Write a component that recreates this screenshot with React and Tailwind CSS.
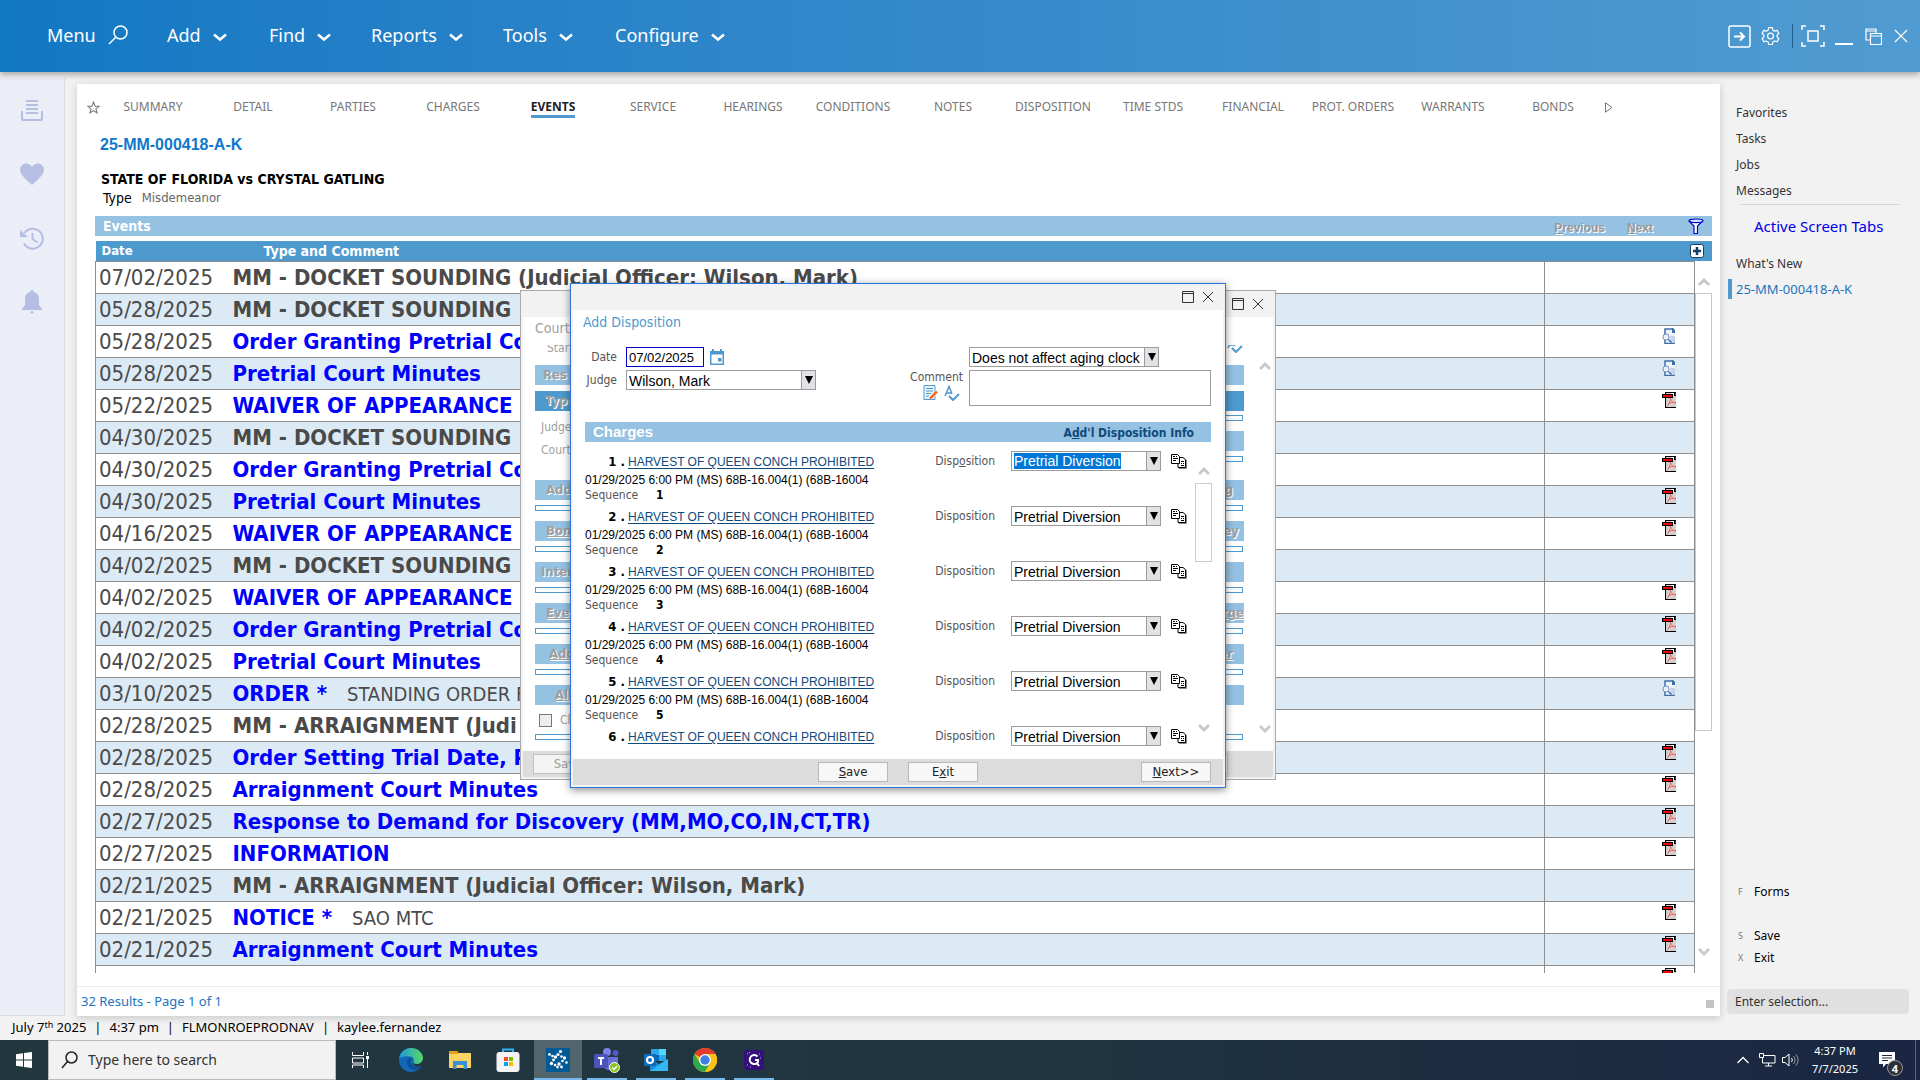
import React from "react";

const UI = "font-['Noto_Sans','Open_Sans',sans-serif]";
const TAH = "font-['DejaVu_Sans_Condensed','DejaVu_Sans',sans-serif]";
const ARIAL = "font-['Liberation_Sans',Arial,sans-serif]";

const MENUS = [
  { label: "Add", w: "w-[102px]" },
  { label: "Find", w: "w-[102px]" },
  { label: "Reports", w: "w-[132px]" },
  { label: "Tools", w: "w-[112px]" },
  { label: "Configure", w: "w-[140px]" },
];

const TABS = [
  "SUMMARY", "DETAIL", "PARTIES", "CHARGES", "EVENTS", "SERVICE", "HEARINGS", "CONDITIONS",
  "NOTES", "DISPOSITION", "TIME STDS", "FINANCIAL", "PROT. ORDERS", "WARRANTS", "BONDS",
];

const EVENTS = [
  { d: "07/02/2025", t: "MM - DOCKET SOUNDING (Judicial Officer: Wilson, Mark)" },
  { d: "05/28/2025", t: "MM - DOCKET SOUNDING" },
  { d: "05/28/2025", t: "Order Granting Pretrial Conf", link: true, icon: "doc" },
  { d: "05/28/2025", t: "Pretrial Court Minutes", link: true, icon: "doc" },
  { d: "05/22/2025", t: "WAIVER OF APPEARANCE", link: true, icon: "pdf" },
  { d: "04/30/2025", t: "MM - DOCKET SOUNDING" },
  { d: "04/30/2025", t: "Order Granting Pretrial Conf", link: true, icon: "pdf" },
  { d: "04/30/2025", t: "Pretrial Court Minutes", link: true, icon: "pdf" },
  { d: "04/16/2025", t: "WAIVER OF APPEARANCE", link: true, icon: "pdf" },
  { d: "04/02/2025", t: "MM - DOCKET SOUNDING" },
  { d: "04/02/2025", t: "WAIVER OF APPEARANCE", link: true, icon: "pdf" },
  { d: "04/02/2025", t: "Order Granting Pretrial Conf", link: true, icon: "pdf" },
  { d: "04/02/2025", t: "Pretrial Court Minutes", link: true, icon: "pdf" },
  { d: "03/10/2025", t: "ORDER *", note: "STANDING ORDER F", link: true, icon: "doc" },
  { d: "02/28/2025", t: "MM - ARRAIGNMENT (Judi" },
  { d: "02/28/2025", t: "Order Setting Trial Date, P", link: true, icon: "pdf" },
  { d: "02/28/2025", t: "Arraignment Court Minutes", link: true, icon: "pdf" },
  { d: "02/27/2025", t: "Response to Demand for Discovery (MM,MO,CO,IN,CT,TR)", link: true, icon: "pdf" },
  { d: "02/27/2025", t: "INFORMATION", link: true, icon: "pdf" },
  { d: "02/21/2025", t: "MM - ARRAIGNMENT (Judicial Officer: Wilson, Mark)" },
  { d: "02/21/2025", t: "NOTICE *", note: "SAO MTC", link: true, icon: "pdf" },
  { d: "02/21/2025", t: "Arraignment Court Minutes", link: true, icon: "pdf" },
  { d: "", t: "", icon: "pdf" },
];

const PdfIcon = () => (
  <svg width="14" height="16" viewBox="0 0 14 16" aria-hidden="true">
    <rect x="3" y="0" width="11" height="16" fill="#000" />
    <rect x="4" y="1" width="10" height="14" fill="#d0d0d0" />
    <rect x="9" y="1" width="3" height="3" fill="#fff" />
    <rect x="12" y="0" width="2" height="4" fill="#000" />
    <rect x="13" y="1" width="1" height="2" fill="#f00" />
    <path d="M4.500 14.500c2-1.500 4-5 4-8 1 3 2.500 4.500 5.500 4.500M6 12c2-1.500 5-2 8-1.500" stroke="#f76a5c" fill="none" />
    <rect x="0" y="2" width="11" height="4" fill="#000" />
    <rect x="1" y="3" width="9" height="2" fill="#f00" />
  </svg>
);

const DocIcon = () => (
  <svg width="14" height="16" viewBox="0 0 14 16" aria-hidden="true">
    <path d="M3 1h8l2 4v10H3z" fill="#eef3fa" />
    <path d="M3 6V1h8M3 12v3.500h10" stroke="#3f6ea8" strokeWidth="1.500" fill="none" />
    <path d="M10 0h1l2 2v3h-3z" fill="#3f6ea8" />
    <path d="M8 8h5v6H9z" fill="#c6d4e9" />
    <circle cx="4" cy="9" r="3" fill="#edf3fb" stroke="#6d93c2" />
    <path d="M6.500 11.500l3 3" stroke="#3f6ea8" strokeWidth="1.500" />
  </svg>
);

const Chev = ({ up, size = 12 }) => (
  <svg width={size} height="10" viewBox="0 0 12 10" aria-hidden="true">
    <path d={up ? "M1 8l5-5 5 5" : "M1 2l5 5 5-5"} stroke="#c8c8c8" strokeWidth="3" fill="none" />
  </svg>
);

const Tri = () => (
  <svg width="8" height="8" viewBox="0 0 8 8" aria-hidden="true"><path d="M0 0h8L4 8z" fill="#000" /></svg>
);

function Combo({ id, value, width, selected, label }) {
  return (
    <div className={`flex h-5 items-stretch border border-[#9b9b9b] bg-white ${width}`}>
      <select
        id={id}
        aria-label={label}
        className={
          selected
            ? `${ARIAL} my-px ml-0.5 appearance-none bg-[#0078d7] text-sm leading-4 text-white outline-none [field-sizing:content]`
            : `${ARIAL} ml-0.5 min-w-0 flex-1 appearance-none bg-white pt-0.5 text-sm leading-4 text-black outline-none`
        }
      >
        <option>{value}</option>
      </select>
      <span className="ml-auto flex w-3.5 shrink-0 items-center justify-center border-l border-[#9b9b9b] bg-[#e1e1e6]">
        <Tri />
      </span>
    </div>
  );
}

const WinButtons = () => (
  <span className="flex items-center gap-2 text-[#333]">
    <button aria-label="Maximize">
      <svg className="block" width="12" height="12" viewBox="0 0 12 12"><path d="M.5.5h11v11H.5zM0 2.500h12" stroke="currentColor" fill="none" /></svg>
    </button>
    <button aria-label="Close">
      <svg className="block" width="12" height="12" viewBox="0 0 12 12"><path d="M1 1l10 10M11 1L1 11" stroke="currentColor" fill="none" /></svg>
    </button>
  </span>
);

const SpellIcon = () => (
  <svg width="16" height="16" viewBox="0 0 16 16" className="shrink-0" aria-hidden="true">
    <path d="M1 11L5 1.500 8 9M2.500 8H7" stroke="#4e9acf" strokeWidth="1.500" fill="none" />
    <path d="M5 11l4 4 6-6" stroke="#4e9acf" strokeWidth="2" fill="none" />
  </svg>
);

const CopyIcon = () => (
  <svg width="16" height="15" viewBox="0 0 16 15" aria-hidden="true">
    <path d="M8 14.500h7.500V6" stroke="#888" fill="none" />
    <path d="M7 3.500h5l2.500 2v8H7z" fill="#fff" stroke="#000" />
    <path d="M.5.500h6l2 2V9.500H.5z" fill="#fff" stroke="#000" />
    <path d="M2 2.500h2M5 2.500h1M2 4.500h5M2 6.500h3M10 7.500h3M10 9.500h1M12 9.500h1M10 11.500h3" stroke="#000" />
  </svg>
);

const DisabledText = ({ children, under }) => (
  <span className={`text-[13px] font-bold text-[#a0a0a0] [text-shadow:1px_1px_0_#fff] ${under ? "underline" : ""}`}>{children}</span>
);

const Strip = () => <div className="mr-px h-1.5 shrink-0 border border-[#4e9acf] bg-white" />;

function BackDialog() {
  const bars = [
    ["Add", "g", "pl-[11px]", "pr-[11px]"],
    ["Bon", "ey", "pl-[11px]", "pr-[5px]"],
    ["Inter", "", "pl-1.5", "pr-1"],
    ["Eve", "rge", "pl-[11px]", "pr-0"],
    ["Add", "er", "pl-3.5", "pr-[11px]"],
    ["All", "", "pl-5", "pr-1"],
  ];
  return (
    <section aria-label="Hearing" className={`${TAH} absolute left-[520px] top-[290px] flex h-[490px] w-[756px] flex-col border border-[#aaa] bg-[#f2f2f2] px-0.5 pb-0.5 text-xs text-[#a0a0a0]`}>
      <header className="flex h-[26px] shrink-0 items-center justify-end pr-[9px]"><WinButtons /></header>
      <div className="flex min-h-0 flex-1 bg-white pl-3">
        <div className="flex min-w-0 flex-1 flex-col">
          <h2 className="pt-0.5 text-sm leading-[18px]">Courtr</h2>
          <div className="mt-2 flex h-4 items-start justify-between pl-3">
            <span className="h-2 overflow-hidden"><span className="block leading-[6px]">Start</span></span>
            <span className="flex h-2 items-end overflow-hidden pr-px"><SpellIcon /></span>
          </div>
          <div className="mt-1 flex h-5 shrink-0 items-center bg-[#95c1e2] pl-2"><DisabledText>Res</DisabledText></div>
          <div className="mt-1.5 flex h-5 shrink-0 items-center bg-[#4e9acf] pl-2.5"><DisabledText>Type</DisabledText></div>
          <div className="grid h-[69px] shrink-0 grid-cols-2">
            <div className="flex flex-col gap-2 pl-1.5 pt-[9px]">
              <span className="leading-[15px]">Judge</span>
              <span className="leading-[15px]">Court</span>
            </div>
            <div className="flex flex-col pt-1">
              <Strip />
              <div className="mt-2.5 mb-[5px] h-5 bg-[#95c1e2]" />
              <Strip />
            </div>
          </div>
          {bars.map(([l, r, pl, pr], i) => (
            <div key={i} className="h-[41px] shrink-0">
              <div className={`flex h-5 items-center justify-between bg-[#95c1e2] ${pl} ${pr}`}>
                <DisabledText under={i !== 0 && i !== 2}>{l}</DisabledText>
                <DisabledText under={i > 2}>{r}</DisabledText>
              </div>
              {i < 5 ? (
                <div className="pt-[5px]"><Strip /></div>
              ) : (
                <label className="flex items-center gap-2 pl-1 pt-[7px]">
                  <input type="checkbox" className="size-[13px] appearance-none border border-[#777] bg-[#eee]" />
                  Clo
                </label>
              )}
            </div>
          ))}
          <div className="mt-2"><Strip /></div>
        </div>
        <div className="flex w-[29px] flex-col items-center justify-between pb-[17px] pl-3 pt-11">
          <Chev up />
          <Chev />
        </div>
      </div>
      <footer className="flex h-[26px] shrink-0 items-center justify-between bg-[#dcdcdc] pl-2.5 pr-[45px]">
        <button className="h-5 w-[70px] border border-[#c0c0c0] bg-[#f4f4f4] text-[13px] leading-4">Save</button>
        <span className="h-5 w-[70px] border border-[#c0c0c0] bg-[#f4f4f4]" />
      </footer>
    </section>
  );
}

function DispositionDialog() {
  const label = "text-xs text-[#555]";
  const btn = "h-5 w-[70px] border border-[#b8b8b8] bg-[#f7f7f7] text-[13px] leading-4 text-[#222]";
  return (
    <section aria-label="Add Disposition" className={`${TAH} absolute left-[570px] top-[283px] flex h-[505px] w-[656px] flex-col border border-[#2f74dd] bg-[#f2f2f2] px-0.5 pb-0.5 shadow-[0_2px_8px_rgba(0,0,0,0.45)]`}>
      <header className="flex h-[26px] shrink-0 items-center justify-end pr-[9px]"><WinButtons /></header>
      <div className="flex min-h-0 flex-1 flex-col bg-white pl-3 pr-3">
        <h2 className="-ml-0.5 pt-0.5 text-sm leading-5 text-[#4e9acf]">Add Disposition</h2>
        <div className="mt-[15px] flex justify-between">
          <div className="flex flex-col gap-[3px]">
            <div className="flex items-center">
              <label htmlFor="date" className={`${label} w-8 text-right`}>Date</label>
              <input id="date" defaultValue="07/02/2025" className={`${ARIAL} ml-[9px] h-5 w-[78px] border border-[#0000c8] bg-white pl-0.5 text-[13px] outline-none`} />
              <button aria-label="Pick date" className="ml-1.5">
                <svg width="14" height="16" viewBox="0 0 14 16"><path d="M0 2h2V0h2v2h6V0h2v2h2v14H0z" fill="#4e9acf" /><path d="M1.500 5.500h11v9h-11z" fill="#fff" /><path d="M8 9h3.500v3.500H8z" fill="#4e9acf" /></svg>
              </button>
            </div>
            <div className="flex items-center">
              <label htmlFor="judge" className={`${label} flex w-8 justify-end`}>Judge</label>
              <div className="ml-[9px]"><Combo id="judge" value="Wilson, Mark" width="w-[190px]" /></div>
            </div>
          </div>
          <div className="flex gap-1.5">
            <div className="pt-[23px] text-right">
              <label htmlFor="comment" className={`${label} block leading-[15px]`}>Comment</label>
              <div className="flex items-center justify-end gap-1.5 pr-[3px]">
                <button aria-label="Edit comment">
                  <svg className="block" width="15" height="16" viewBox="0 0 15 16"><path d="M1 .5h11v14H1z" fill="#eaf4fb" stroke="#4e9acf" /><path d="M3 3.500h7M3 6h7M3 8.500h5M3 11h3" stroke="#4e9acf" /><path d="M7 13l7-6" stroke="#fff" strokeWidth="4" /><path d="M7 13.500l7-7" stroke="#ef6c2a" strokeWidth="2.500" /></svg>
                </button>
                <button aria-label="Check spelling"><span className="block"><SpellIcon /></span></button>
              </div>
            </div>
            <div className="flex flex-col gap-[3px]">
              <Combo value="Does not affect aging clock" width="w-[190px]" label="Aging clock" />
              <textarea id="comment" className="block h-9 w-[242px] resize-none border border-[#9b9b9b] bg-white outline-none" />
            </div>
          </div>
        </div>
        <div className="mt-4 flex h-5 shrink-0 items-center justify-between bg-[#95c1e2] pl-2 pr-[17px]">
          <h3 className={`${ARIAL} text-[15px] font-bold leading-5 text-white`}>Charges</h3>
          <a href="#info" className="pt-0.5 text-xs font-bold text-[#0f4a7c]">A<u>d</u>d'l Disposition Info</a>
        </div>
        <div className="mt-[9px] flex min-h-0 flex-1">
          <ol className="min-w-0 flex-1 overflow-hidden">
            {[1, 2, 3, 4, 5, 6].map((n) => (
              <li key={n} className="flex h-[55px] justify-between pr-2">
                <div>
                  <div className="flex h-5 items-center pt-px">
                    <span className="w-10 text-right text-[13px] font-bold">{n} .</span>
                    <a href={`#charge-${n}`} className={`${ARIAL} ml-[3px] text-xs text-[#0f4a7c] underline underline-offset-2`}>HARVEST OF QUEEN CONCH PROHIBITED</a>
                  </div>
                  {n < 6 && (
                    <>
                      <p className={`${ARIAL} pt-px text-xs leading-4`}>01/29/2025 6:00 PM (MS) 68B-16.004(1) (68B-16004</p>
                      <p className="flex gap-4 text-xs leading-[15px]"><span className="w-[55px] text-[#555]">Sequence</span><b>{n}</b></p>
                    </>
                  )}
                </div>
                <div className="flex h-5 items-center">
                  <label htmlFor={`disp-${n}`} className={label}>Disp{n === 1 ? <u>o</u> : "o"}sition</label>
                  <div className="ml-4"><Combo id={`disp-${n}`} value="Pretrial Diversion" width="w-[150px]" selected={n === 1} /></div>
                  <button aria-label="Copy disposition" className="ml-2.5"><CopyIcon /></button>
                </div>
              </li>
            ))}
          </ol>
          <div className="-mr-px flex w-[17px] flex-col items-center pb-[26px] pt-[15px]">
            <Chev up />
            <div className="mt-[7px] h-[79px] w-full border border-[#ccc] bg-white" />
            <div className="mt-auto"><Chev /></div>
          </div>
        </div>
      </div>
      <footer className="flex h-[26px] shrink-0 items-center bg-[#dcdcdc] pl-[245px] pr-3">
        <button className={btn}><u>S</u>ave</button>
        <button className={`${btn} ml-5`}>E<u>x</u>it</button>
        <button className={`${btn} ml-auto`}><u>N</u>ext&gt;&gt;</button>
      </footer>
    </section>
  );
}

function TopBar() {
  return (
    <header className={`${UI} relative z-10 flex h-[72px] shrink-0 items-center justify-between bg-linear-to-r from-[#1178c4] to-[#509bd1] pl-[47px] pr-3 text-white shadow-[0_3px_6px_rgba(0,0,0,0.3)]`}>
      <nav className="flex items-center pb-0.5 text-lg">
        <button className="flex w-[120px] items-center gap-3">
          Menu
          <svg width="20" height="20" viewBox="0 0 20 20" fill="none" stroke="currentColor" strokeWidth="1.500"><circle cx="12.500" cy="7.500" r="6.500" /><path d="M8 12l-7 7" /></svg>
        </button>
        {MENUS.map((m) => (
          <button key={m.label} className={`flex items-center gap-3 ${m.w}`}>
            {m.label}
            <svg className="mt-1" width="14" height="9" viewBox="0 0 14 9"><path d="M1 1.500l6 5 6-5" stroke="currentColor" strokeWidth="2.500" fill="none" /></svg>
          </button>
        ))}
      </nav>
      <div className="flex items-center">
        <button aria-label="Sign out"><svg width="23" height="23" viewBox="0 0 23 23" fill="none" stroke="currentColor" strokeWidth="1.500"><rect x="1" y="1" width="21" height="21" rx="2" /><path d="M6 11.500h10M12 7.500l4 4-4 4" strokeWidth="2" /></svg></button>
        <button aria-label="Settings" className="ml-2.5">
          <svg width="19" height="20" viewBox="0 0 24 24" fill="none" stroke="currentColor" strokeWidth="1.500" strokeLinejoin="round"><path d="M9.700 1.500h4.600l.7 3.100 2.300 1.300 3-1 2.300 4-2.300 2v2.400l2.300 2-2.300 4-3-1-2.300 1.300-.7 3.100H9.700L9 19.600l-2.300-1.300-3 1-2.300-4 2.300-2v-2.400l-2.300-2 2.300-4 3 1L9 4.600z" /><circle cx="12" cy="12.100" r="3.700" /></svg>
        </button>
        <span className="ml-3 h-6 w-px bg-[#1e5f94]" />
        <button aria-label="Fit" className="ml-2"><svg width="24" height="22" viewBox="0 0 24 22" fill="none" stroke="currentColor" strokeWidth="1.500"><path d="M1 5V1h4M19 1h4v4M23 17v4h-4M5 21H1v-4M7 6h10v10H7z" /></svg></button>
        <button aria-label="Minimize" className="ml-2.5 mt-4 h-0.5 w-[18px] bg-white" />
        <button aria-label="Restore" className="ml-3"><svg width="17" height="17" viewBox="0 0 17 17" fill="none" stroke="currentColor" strokeWidth="1.200"><path d="M5 12H1V1h10v4M1 3h10M5.500 5.500h11v11h-11zM5.500 8h11" /></svg></button>
        <button aria-label="Close" className="ml-3"><svg width="14" height="14" viewBox="0 0 14 14" stroke="currentColor" strokeWidth="1.200"><path d="M1 1l12 12M13 1L1 13" /></svg></button>
      </div>
    </header>
  );
}

function Rail() {
  return (
    <nav aria-label="Shortcuts" className="mt-1.5 flex w-[65px] shrink-0 flex-col items-center gap-10 border-r border-b border-[#dcdce0] bg-[#ebedf7] pt-5 text-[#b5bee3]">
      <button aria-label="Print queue" className="size-6"><svg width="24" height="24" viewBox="0 0 24 24" fill="none" stroke="currentColor" strokeWidth="2"><path d="M6 3h12M6 7h12M6 11h12M6 15h12" /><path d="M2 13v8q0 1 1 1h18q1 0 1-1v-8" /></svg></button>
      <button aria-label="Favorites" className="size-6"><svg width="24" height="24" viewBox="0 0 24 24" fill="currentColor"><path d="M12 23C6 17.500 0 12.500 0 7.500A6 6 0 0 1 6.200 1.500C8.500 1.500 10.700 2.700 12 5c1.300-2.300 3.500-3.500 5.800-3.500A6 6 0 0 1 24 7.500C24 12.500 18 17.500 12 23z" /></svg></button>
      <button aria-label="History" className="size-6"><svg width="24" height="24" viewBox="0 0 24 24" fill="none" stroke="currentColor" strokeWidth="2"><path d="M4.500 7A10 10 0 1 1 4 17.500" /><path d="M12.500 7v6l5 3.500" /><path d="M0 4l8 7H0z" fill="currentColor" stroke="none" /></svg></button>
      <button aria-label="Alerts" className="size-6"><svg width="24" height="24" viewBox="0 0 24 24" fill="currentColor"><path d="M12 0c1 0 1.500.8 1.500 1.800 3.500.8 5.500 3.700 5.500 7.200v6l3 4v1H2v-1l3-4V9c0-3.500 2-6.400 5.500-7.200C10.500.8 11 0 12 0zM10 21.500h4a2 2 0 0 1-4 0z" /></svg></button>
    </nav>
  );
}

function CaseCard() {
  return (
    <main className="ml-3 mt-3 flex min-w-0 flex-1 flex-col bg-white shadow-[0_2px_8px_rgba(0,0,0,0.18)]">
      <nav aria-label="Case sections" className={`${UI} flex h-[46px] shrink-0 items-center pl-2 text-xs text-[#777]`}>
        <button aria-label="Favorite" className="w-[18px] pl-0.5">
          <svg width="13" height="13" viewBox="0 0 24 24" fill="none" stroke="#777" strokeWidth="2"><path d="M12 2l3 7.500 7.500.3-6 4.700 2 7.500-6.500-4.300L5.500 22l2-7.500-6-4.700L9 9.500z" /></svg>
        </button>
        {TABS.map((t) => (
          <a key={t} href={`#${t}`} className="w-25 text-center">
            {t === "EVENTS" ? <span className="mt-0.5 inline-block border-b-3 border-[#4e9acf] font-bold leading-4 text-[#222]">{t}</span> : t}
          </a>
        ))}
        <button aria-label="More" className="ml-0.5"><svg width="8" height="11" viewBox="0 0 8 11"><path d="M.5.800l6.500 4.700-6.500 4.700z" fill="none" stroke="#777" /></svg></button>
      </nav>
      <div className={`${TAH} shrink-0 pl-[23px]`}>
        <h1 className={`${ARIAL} pt-[5px] text-base font-bold leading-5 text-[#0f78cb]`}>25-MM-000418-A-K</h1>
        <p className="pl-px pt-[15px] text-sm font-bold leading-[18px]">STATE OF FLORIDA vs CRYSTAL GATLING</p>
        <p className="flex h-5 items-center gap-2.5 pl-[3px] text-[13px]"><span className="text-sm leading-5">Type</span><span className="text-[#666]">Misdemeanor</span></p>
      </div>
      <div className={`${TAH} ml-[18px] mr-2 mt-2 flex h-5 shrink-0 items-center bg-[#95c1e2] pl-2 text-sm font-bold text-white`}>
        <h2 className="flex-1">Events</h2>
        <button disabled className={`${ARIAL} mr-[22px] pt-1 text-xs text-[#999] [text-shadow:1px_1px_0_#fff]`}><u>P</u>revious</button>
        <button disabled className={`${ARIAL} mr-[35px] pt-1 text-xs text-[#999] [text-shadow:1px_1px_0_#fff]`}><u>N</u>ext</button>
        <button aria-label="Filter" className="mr-2"><svg className="block" width="16" height="16" viewBox="0 0 16 16"><path d="M1 3l5 5v7.500h3.500V8l5-5" fill="#fff" stroke="#00c" strokeWidth="1.200" /><ellipse cx="8" cy="2.800" rx="7" ry="1.800" fill="#cfe4ff" stroke="#00c" strokeWidth="1.200" /></svg></button>
      </div>
      <div className={`${TAH} ml-[18px] mr-2 mt-[5px] flex min-h-0 flex-1 basis-0 overflow-hidden`}>
        <table className="h-0 flex-1 table-fixed border-collapse">
          <colgroup><col className="w-[137px]" /><col /><col className="w-[150px]" /></colgroup>
          <thead>
            <tr className="h-5 bg-[#4e9acf] text-left text-sm leading-5 text-white">
              <th className="p-0 pl-1.5 text-[13px] leading-5">Date</th>
              <th className="p-0 pl-[31px]">Type and Comment</th>
              <th />
            </tr>
          </thead>
          <tbody className="text-[22px] leading-[31px] text-[#4a4a4a]">
            {EVENTS.map((e, i) => (
              <tr key={i} className="h-8 border border-[#8e8e8e] even:bg-[#dceaf5]">
                <td className="p-0 pl-[3px] whitespace-nowrap">{e.d}</td>
                <td className="p-0 whitespace-nowrap">
                  {e.link ? <a href={`#event-${i}`} className="font-bold text-[#0000ff]">{e.t}</a> : <b>{e.t}</b>}
                  {e.note && <span className="pl-5 text-xl leading-5">{e.note}</span>}
                </td>
                <td className="border-l border-[#8e8e8e] p-0 pl-[117px] align-top">
                  {e.icon && <button aria-label="Open document" className="mt-0.5 block">{e.icon === "pdf" ? <PdfIcon /> : <DocIcon />}</button>}
                </td>
              </tr>
            ))}
          </tbody>
        </table>
        <div className="flex w-[17px] shrink-0 flex-col items-center">
          <div className="flex h-5 w-[26px] shrink-0 items-center self-end bg-[#4e9acf] pl-1">
            <button aria-label="Add event"><svg className="block" width="14" height="14" viewBox="0 0 14 14"><rect x=".5" y=".5" width="13" height="13" rx="2" fill="#fff" stroke="#123f66" /><path d="M7 3v8M3 7h8" stroke="#123f66" strokeWidth="2.500" /></svg></button>
          </div>
          <div className="mt-4"><Chev up size={14} /></div>
          <div className="mt-1.5 h-[438px] w-full border border-[#c8c8c8]" />
          <div className="mb-4 mt-auto"><Chev size={14} /></div>
        </div>
      </div>
      <footer className={`${UI} mt-[13px] flex h-[30px] shrink-0 items-center justify-between border-t border-[#eee] pl-1 pr-1.5 text-[13px] text-[#1b75bc]`}>
        32 Results - Page 1 of 1
        <span className="mt-1 size-2 bg-[#c4c4c4]" />
      </footer>
    </main>
  );
}

function SidePanel() {
  const item = "block h-[26px] leading-[26px]";
  return (
    <aside className={`${UI} flex w-[200px] shrink-0 flex-col pt-7 pl-2 text-xs text-[#333]`}>
      <nav className="pl-2">
        {["Favorites", "Tasks", "Jobs", "Messages"].map((t) => <a key={t} href={`#${t}`} className={item}>{t}</a>)}
      </nav>
      <hr className="ml-3 mr-5 border-[#d8d8d8]" />
      <h2 className="pl-[26px] pt-2 text-[15px] leading-[26px] text-[#0000e6]">Active Screen Tabs</h2>
      <a href="#new" className={`${item} mt-3 pl-2`}>What's New</a>
      <a href="#case" className="mt-0.5 block h-5 border-l-4 border-[#4e9acf] pl-1 text-[13px] leading-5 text-[#1b75bc]">25-MM-000418-A-K</a>
      <nav className="mt-auto pl-2.5 text-black">
        {[["F", "Forms", "mb-[22px]"], ["S", "Save", ""], ["X", "Exit", ""]].map(([k, t, m]) => (
          <button key={t} className={`flex h-[22px] items-center ${m}`}><span className="w-4 text-left text-[9px] text-[#777]">{k}</span>{t}</button>
        ))}
      </nav>
      <input aria-label="Enter selection" placeholder="Enter selection..." className="mb-0.5 mr-[11px] mt-5 -ml-px h-[25px] rounded-sm bg-[#e0e0e0] px-2 text-xs outline-none placeholder:text-[#333]" />
    </aside>
  );
}

function TaskIcon({ label, w = "w-[49px]", open, active, children }) {
  return (
    <button aria-label={label} className={`flex h-10 flex-col items-center ${w}`}>
      <span className={`flex w-full flex-1 items-center justify-center pt-0.5 ${active ? "bg-[#53656c]" : ""}`}>{children}</span>
      <span className={`h-0.5 ${active ? "w-full" : "w-10"} ${open || active ? "bg-[#76b9ed]" : ""}`} />
    </button>
  );
}

function Taskbar() {
  return (
    <footer className={`${UI} flex h-10 shrink-0 items-center bg-linear-to-r from-[#22383f] via-[#203540] to-[#1a2642] text-white`}>
      <button aria-label="Start" className="flex w-12 justify-center">
        <svg width="16" height="16" viewBox="0 0 16 16" fill="#fff"><path d="M0 2.200l7-1V7.500H0zM8 1l8-1v7.500H8zM0 8.500h7v6.300l-7-1zM8 8.500h8V16l-8-1z" /></svg>
      </button>
      <label className="flex h-10 w-72 items-center gap-2.5 border border-[#bbb] bg-[#f2f2f2] pl-3 text-[#222]">
        <svg width="17" height="18" viewBox="0 0 17 18" fill="none" stroke="#222" strokeWidth="1.500"><circle cx="10.500" cy="6.500" r="5.500" /><path d="M6.500 10.500L1 17" /></svg>
        <input aria-label="Search" placeholder="Type here to search" className="min-w-0 flex-1 bg-transparent text-sm outline-none placeholder:text-[#333]" />
      </label>
      <TaskIcon label="Task view">
        <svg width="17" height="16" viewBox="0 0 17 16" fill="none" stroke="#fff"><path d="M.5 0v3.500h11V0M.5 6h11v5H.5zM.5 16v-3h11v3M15.500 0v3M15.500 7v9" /><path d="M14 4h3v3h-3z" fill="#fff" stroke="none" /></svg>
      </TaskIcon>
      <TaskIcon label="Edge" w="w-[51px]">
        <svg width="24" height="24" viewBox="0 0 24 24">
          <defs>
            <linearGradient id="eg" x1="0" x2="1"><stop offset="0" stopColor="#1d9bdc" /><stop offset="1" stopColor="#58d765" /></linearGradient>
          </defs>
          <circle cx="12" cy="12" r="12" fill="#1268b4" />
          <path d="M0 11C1 4 6 0 12 0c7 0 12 5 12 10 0 4-3 6-6.500 6-2.500 0-3.500-1-3-2 1-1.500.5-5-3.500-5.500C6 8 1 9 0 11z" fill="url(#eg)" />
          <path d="M8 12c-1 5 3 10 9 10 2-.3 4-2 5-3.500-5 2-10-1-10.500-4 0-1.500.5-3 1.500-3.500-2-1-4.500-.5-5 1z" fill="#0d4f94" />
          <path d="M24 10c0 4-3 6-6.500 6-2.500 0-3.500-1-3-2C13 17 17 20 22.500 18L24 17z" fill="#22383f" />
        </svg>
      </TaskIcon>
      <TaskIcon label="File Explorer" w="w-[48px]">
        <svg width="22" height="18" viewBox="0 0 22 18"><path d="M0 0h8l2 2v4H0z" fill="#e3a21a" /><path d="M0 3h9l1-1h12v15H0z" fill="#fcd465" /><path d="M4 10h14v8h-3.500v-4h-7v4H4z" fill="#3b91d6" /></svg>
      </TaskIcon>
      <TaskIcon label="Store" w="w-[48px]">
        <svg width="24" height="24" viewBox="0 0 24 24"><path d="M7 6V1.500h10V6" stroke="#2db4f5" strokeWidth="2" fill="none" /><rect x=".5" y="4" width="23" height="20" rx="3" fill="#f4f4f4" /><path d="M8 9h4v4H8z" fill="#f04e23" /><path d="M13 9h4v4h-4z" fill="#7dba00" /><path d="M8 14h4v4H8z" fill="#00a3ee" /><path d="M13 14h4v4h-4z" fill="#fdb900" /></svg>
      </TaskIcon>
      <TaskIcon label="Case manager" w="ml-0.5 w-12" active>
        <svg width="24" height="24" viewBox="0 0 24 24"><path d="M0 0h24v24H0z" fill="#005a96" /><g fill="#fff"><circle cx="14.500" cy="3.500" r="1.600" /><circle cx="12" cy="6.500" r="1.600" /><circle cx="15.500" cy="8.500" r="1.300" /><circle cx="18.500" cy="10" r="1.700" /><circle cx="16.500" cy="13" r="1.300" /><circle cx="20.500" cy="14.500" r="1.300" /><circle cx="3.500" cy="6.500" r="1.400" /><circle cx="6.500" cy="8" r="1.300" /><circle cx="9.500" cy="9" r="1.700" /><circle cx="7.500" cy="12" r="1.400" /><circle cx="5.500" cy="15.500" r="1.700" /><circle cx="9" cy="17" r="1.300" /><circle cx="13" cy="16" r="1.700" /><circle cx="11.500" cy="19" r="1.400" /><circle cx="15.500" cy="19" r="1.400" /></g></svg>
      </TaskIcon>
      <TaskIcon label="Teams" w="w-[49px]" open>
        <svg width="26" height="25" viewBox="0 0 26 25"><circle cx="13" cy="4" r="4" fill="#7b83eb" /><circle cx="21.500" cy="5" r="3" fill="#5059c9" /><path d="M9 9h15v7a6 6 0 0 1-6 6h-3a6 6 0 0 1-6-6z" fill="#6a72d9" /><rect x="0" y="6" width="14" height="14" rx="1.500" fill="#4b53bc" /><path d="M4 10h6M7 10v7" stroke="#fff" strokeWidth="2" /><circle cx="20.500" cy="19.500" r="5" fill="#8bc220" stroke="#fff" /><path d="M18 19.500l2 2 3-3.500" stroke="#fff" strokeWidth="1.500" fill="none" /></svg>
      </TaskIcon>
      <TaskIcon label="Outlook" open>
        <svg width="24" height="23" viewBox="0 0 24 23"><path d="M7 0h15v12H7z" fill="#28a8ea" /><path d="M7 6h8v6H7z" fill="#0364b8" /><path d="M15 0h7v6h-7z" fill="#50d9ff" /><path d="M6 10l9 5 9-5v12H6z" fill="#1490df" /><path d="M6 22L24 10v12z" fill="#35b8f1" /><rect y="5" width="12" height="12" rx="1" fill="#0f6cbd" /><circle cx="6" cy="11" r="3" stroke="#fff" strokeWidth="2" fill="none" /></svg>
      </TaskIcon>
      <TaskIcon label="Chrome" open>
        <svg width="24" height="24" viewBox="0 0 24 24"><circle cx="12" cy="12" r="12" fill="#fbc116" /><path d="M12 12L1.600 6A12 12 0 0 1 22.400 6z" fill="#e33b2e" /><path d="M1.600 6A12 12 0 0 0 12 24l5-9-10 0z" fill="#2da94f" /><path d="M12 6h10.400A12 12 0 0 1 12 24l5.200-9z" fill="#fbc116" /><circle cx="12" cy="12" r="6" fill="#fff" /><circle cx="12" cy="12" r="4.700" fill="#3f7fe8" /></svg>
      </TaskIcon>
      <TaskIcon label="Assistant" open>
        <svg width="20" height="20" viewBox="0 0 20 20"><rect width="20" height="20" rx="4" fill="#35107a" /><path d="M13.500 6.500A4.500 4.500 0 1 0 14 12v-2h-3M13 13l2 3" stroke="#fff" strokeWidth="2" fill="none" /><path d="M3 4h1M5 2.500h1M15 4h1M3 15h1M6 17h1M16 8h1" stroke="#c9b3ff" /></svg>
      </TaskIcon>
      <div className="ml-auto flex items-center">
        <button aria-label="Show hidden icons"><svg width="12" height="8" viewBox="0 0 12 8"><path d="M.5 7L6 1.500 11.500 7" stroke="#fff" strokeWidth="1.300" fill="none" /></svg></button>
        <svg className="ml-2.5" width="17" height="14" viewBox="0 0 17 14" fill="none" stroke="#fff"><path d="M5 2.500h11v7.500H3.500V5M9.500 10v3M6 13h7M.5.500h4v4h-4z" /></svg>
        <svg className="ml-1.5" width="17" height="14" viewBox="0 0 17 14" fill="none" stroke="#fff"><path d="M.5 4.500H3l4-3.500v12L3 9.500H.5zM9.500 5a3 3 0 0 1 0 4" /><path d="M11.500 3a6 6 0 0 1 0 8M14 1.500a9 9 0 0 1 0 11" opacity=".5" /></svg>
        <div className="ml-1.5 w-[60px] text-center text-[11px] leading-[18px]">4:37 PM<br />7/7/2025</div>
        <button aria-label="Notifications, 4 new" className="relative ml-3.5 h-6 w-6">
          <svg width="16" height="16" viewBox="0 0 16 16"><path d="M0 0h16v12H7l-3 3.500V12H0z" fill="#fff" /><path d="M3 3.500h10M3 6h10M3 8.500h6" stroke="#1a2642" /></svg>
          <span className="absolute -bottom-1 right-0 flex size-4 items-center justify-center rounded-full border border-[#999] bg-[#2c2f38] text-[11px] font-bold leading-none">4</span>
        </button>
        <span className="ml-3 mr-1 h-10 w-px bg-[#5b6478]" />
      </div>
    </footer>
  );
}

export default function App() {
  return (
    <div className="relative flex h-screen flex-col overflow-hidden bg-[#f2f2f2] text-black">
      <TopBar />
      <div className="flex min-h-0 flex-1">
        <Rail />
        <CaseCard />
        <SidePanel />
      </div>
      <div className={`${UI} flex h-6 shrink-0 items-center gap-2 pl-3 text-[13px]`}>
        <span>July 7<sup className="text-[9px]">th</sup> 2025</span><span>|</span><span>4:37 pm</span><span>|</span><span>FLMONROEPRODNAV</span><span>|</span><span>kaylee.fernandez</span>
      </div>
      <Taskbar />
      <BackDialog />
      <DispositionDialog />
    </div>
  );
}
